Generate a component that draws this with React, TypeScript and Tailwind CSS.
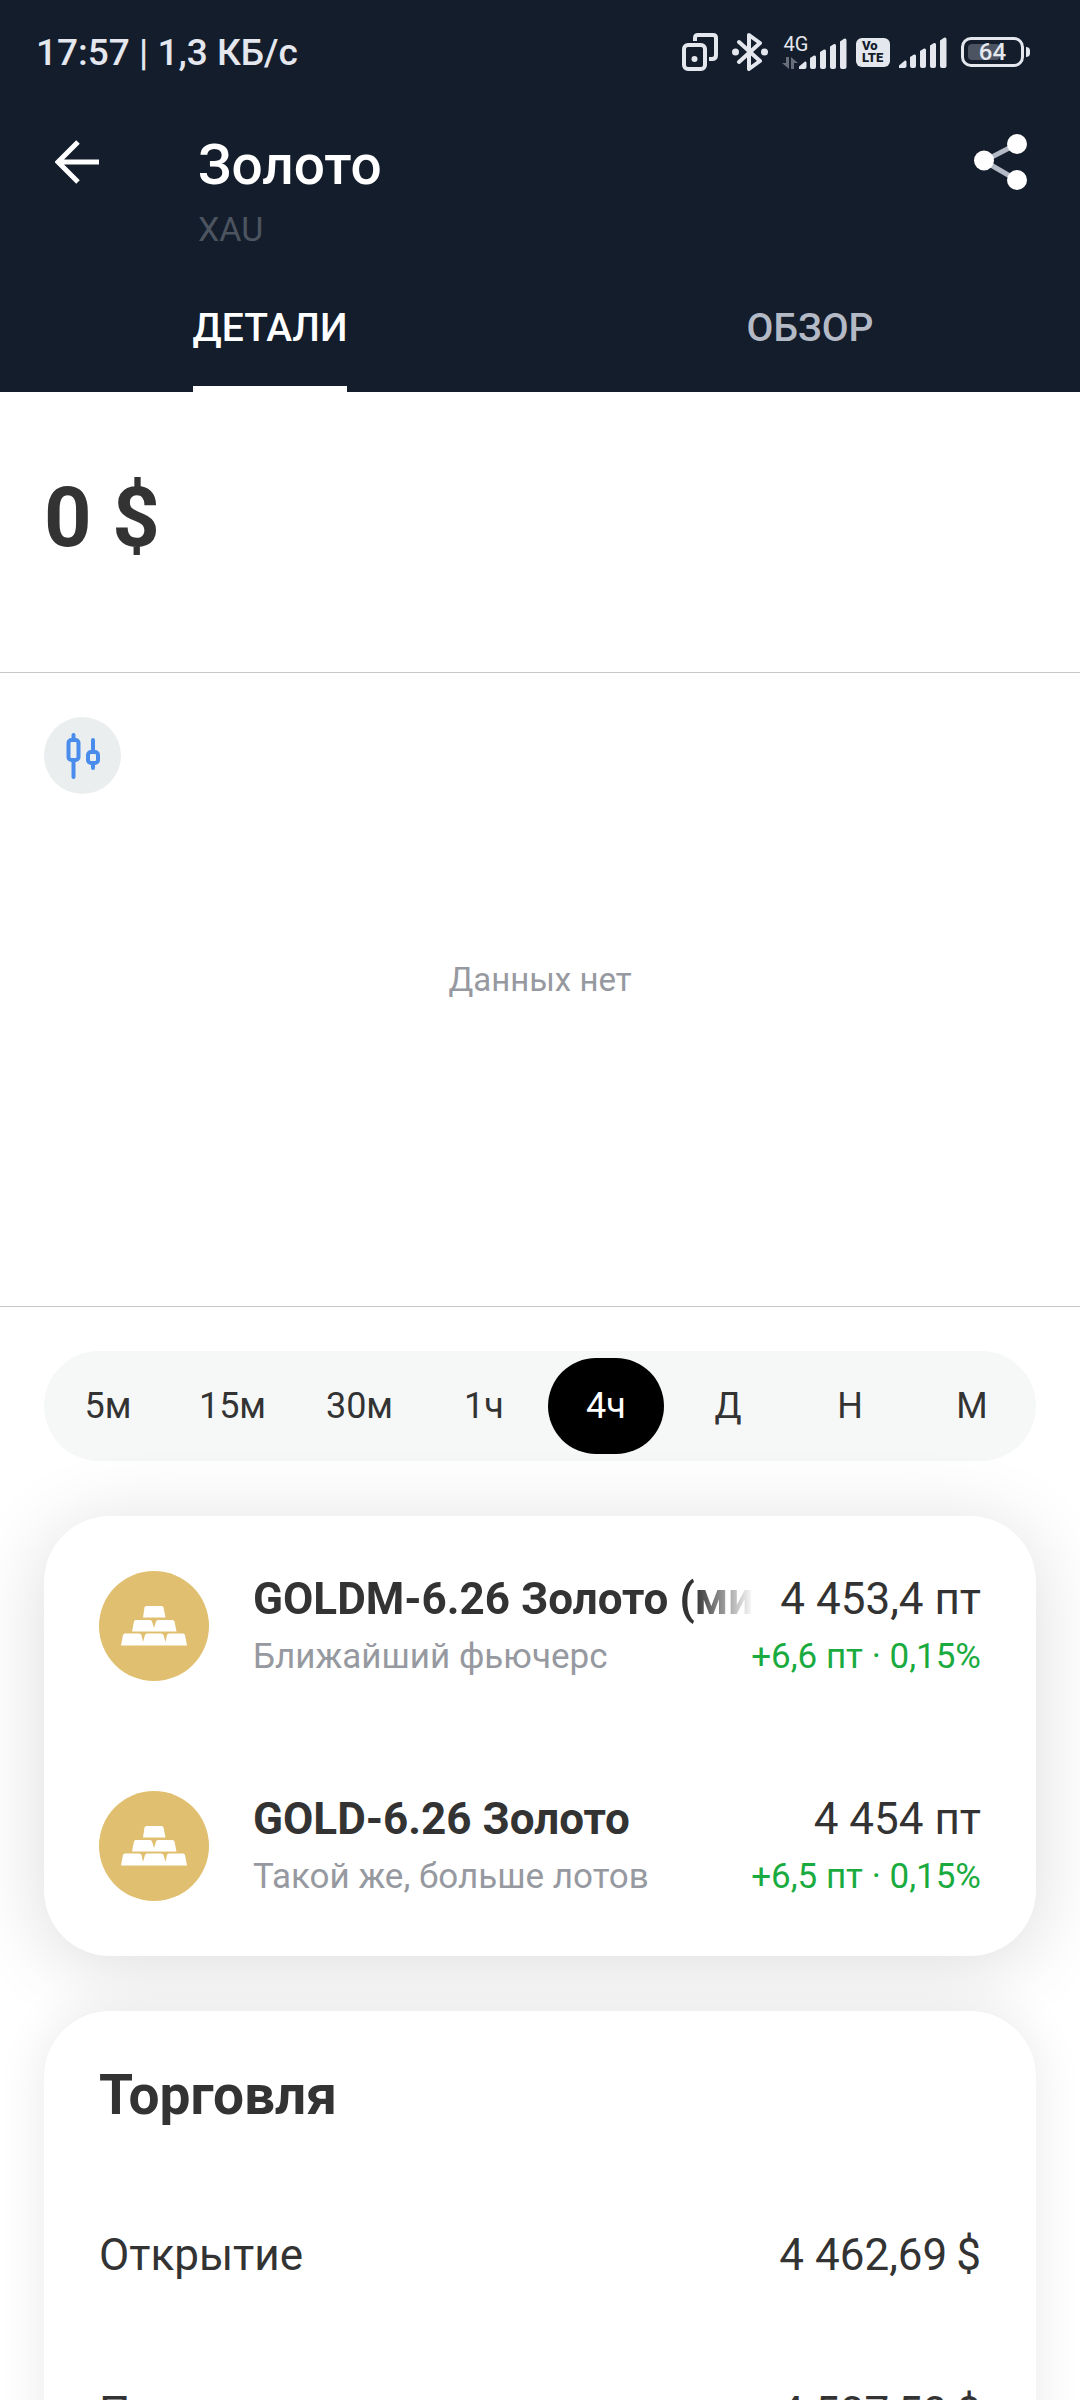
const periods = [
  { label: "5м", size: "basis-[116px]" },
  { label: "15м", size: "basis-[121px]" },
  { label: "30м", size: "basis-[121px]" },
  { label: "1ч", size: "basis-[116px]" },
  { label: "4ч", size: "basis-[116px]", active: true },
  { label: "Д", size: "basis-[116px]" },
  { label: "Н", size: "basis-[116px]" },
  { label: "М", size: "basis-[116px]" },
];

const futures = [
  { name: "GOLDM-6.26 Золото (мин", note: "Ближайший фьючерс", price: "4 453,4 пт", change: "+6,6 пт · 0,15%", fade: true },
  { name: "GOLD-6.26 Золото", note: "Такой же, больше лотов", price: "4 454 пт", change: "+6,5 пт · 0,15%", fade: false },
];

const trading = [
  { label: "Открытие", value: "4 462,69\u2009$" },
  { label: "Предыдущее закрытие", value: "4 507,50\u2009$" },
];

function SignalIcon() {
  return (
    <svg viewBox="0 0 48 31" className="h-[31px] w-12" fill="currentColor">
      <path d="M0 31V28.500L6 23.500Q7.500 23 7.500 25V29Q7.500 31 5.500 31Z" />
      <path d="M11 20L15 17.500Q17 17 17 19V29Q17 31 15 31H13Q11 31 11 29Z" />
      <path d="M21 14L25 11.500Q27 11 27 13V29Q27 31 25 31H23Q21 31 21 29Z" />
      <path d="M31 8.500L35 6Q37 5.500 37 7.500V29Q37 31 35 31H33Q31 31 31 29Z" />
      <path d="M41 3.500L45 .8Q47.500 0 47.500 2.500V29Q47.500 31 45.500 31H43Q41 31 41 29Z" />
    </svg>
  );
}

function StatusBar() {
  return (
    <div className="flex h-[104px] items-center justify-between pl-[36px] pr-[50px] text-[#e4e7ee]">
      <span className="pt-[2px] text-[37px] leading-[44px] font-medium">17:57 | 1,3 КБ/с</span>
      <div className="flex items-center">
        <svg viewBox="0 0 36 38" className="mr-[14px] h-[38px] w-9" fill="none" stroke="currentColor" strokeWidth="4">
          <rect x="2" y="12" width="21" height="24" rx="4" />
          <path d="M13 8V5Q13 2 16 2H31Q34 2 34 5V22Q34 26 30 26H27" />
          <circle cx="12.500" cy="26" r="3" fill="currentColor" stroke="none" />
        </svg>
        <svg viewBox="0 0 36 38" className="mr-[14px] h-[38px] w-9" fill="none" stroke="currentColor" strokeWidth="4">
          <path d="M7 9L28 28L17 36V2L28 10L7 29" strokeLinejoin="round" strokeLinecap="round" />
          <circle cx="3.500" cy="19" r="3.500" fill="currentColor" stroke="none" />
          <circle cx="32.500" cy="19" r="3.500" fill="currentColor" stroke="none" />
        </svg>
        <div className="flex h-[34px] items-end">
          <div className="-mr-[11px] flex h-[34px] flex-col items-center justify-between">
            <span className="text-[20px] leading-[18px]">4G</span>
            <svg viewBox="0 0 16 12" className="mr-3 h-3 w-4 opacity-40" fill="currentColor">
              <path d="M4 0H7V12L0 6H4Z" />
              <path d="M9 12V0L16 6H12V12Z" />
            </svg>
          </div>
          <SignalIcon />
        </div>
        <div className="mx-[9px] flex h-[29px] w-[34px] flex-col justify-center rounded-md bg-[#e4e7ee] pl-[6px] text-[13px] leading-[12px] font-black text-[#141d2b]">
          <span>Vo</span>
          <span>LTE</span>
        </div>
        <SignalIcon />
        <div className="ml-[14px] flex items-center gap-[2px]">
          <div className="relative flex h-[30px] w-[63px] items-center justify-center rounded-[10px] border-3 border-current">
            <div className="absolute inset-y-1 left-1 w-8 rounded-sm bg-[#4d5461]" />
            <span className="relative text-[24px] leading-[24px] font-medium">64</span>
          </div>
          <div className="h-[10px] w-1 rounded-r-full bg-current" />
        </div>
      </div>
    </div>
  );
}

function GoldIcon() {
  return (
    <div className="flex size-[110px] shrink-0 items-center justify-center rounded-full bg-[#e0c070]">
      <svg viewBox="0 0 66 40" className="h-10 w-[66px]" fill="#fff">
        <path d="M25.500 0H40.500Q42 0 42.500 1.500L44.500 11.500H22L23.500 1.500Q24 0 25.500 0Z" />
        <path d="M14.500 14H29Q30.500 14 31 15.500L33 22L35 15.500Q35.500 14 37 14H51.500Q53 14 53.500 15.500L55.500 25.500H11L13 15.500Q13.500 14 14.500 14Z" />
        <path d="M4 27.500H18Q20 27.500 20.500 29L22 36L24 29Q24.500 27.500 26 27.500H40Q42 27.500 42.500 29L44.500 36L46 29Q46.500 27.500 48 27.500H62Q63.500 27.500 64 29L66 39.500H0L2 29Q2.500 27.500 4 27.500Z" />
      </svg>
    </div>
  );
}

export default function App() {
  return (
    <div className="h-screen overflow-hidden bg-white font-[Roboto,sans-serif] text-[#333333]">
      <header className="bg-[#141d2b] text-white">
        <StatusBar />
        <div className="flex h-[160px] items-start pr-[53px] pl-[55px]">
          <button aria-label="Назад" className="mt-9 mr-[99px]">
            <svg viewBox="0 0 44 44" className="size-11" fill="none" stroke="currentColor" strokeWidth="5">
              <path d="M44 22H4M23 2L3 22L23 42" />
            </svg>
          </button>
          <div className="mt-[29px] grow">
            <h1 className="text-[55px] leading-[64px] font-medium">Золото</h1>
            <p className="mt-[10px] text-[34px] leading-[44px] text-[#4c5460]">XAU</p>
          </div>
          <button aria-label="Поделиться" className="mt-[30px]">
            <svg viewBox="0 0 53 56" className="h-14 w-[53px]">
              <path d="M43 10L10 27L43 46" fill="none" stroke="#b4bac5" strokeWidth="5" />
              <circle cx="43" cy="10" r="10" fill="#fff" />
              <circle cx="10" cy="26.500" r="10" fill="#fff" />
              <circle cx="43" cy="46" r="10" fill="#fff" />
            </svg>
          </button>
        </div>
        <nav className="grid h-32 grid-cols-2 text-[39px] leading-[44px] font-medium">
          <div className="flex justify-center">
            <button className="border-b-6 border-white pt-[6px]">ДЕТАЛИ</button>
          </div>
          <div className="flex justify-center">
            <button className="border-b-6 border-transparent pt-[6px] text-[#b4bac5]">ОБЗОР</button>
          </div>
        </nav>
      </header>

      <section className="border-b border-[#c8c8c8] px-11 pt-[78px] pb-[106px]">
        <p className="text-[83px] leading-[96px] font-bold">0 $</p>
      </section>

      <section className="flex h-[634px] flex-col border-b border-[#c8c8c8] px-11 pt-11">
        <button aria-label="Вид графика" className="flex size-[77px] items-center justify-center rounded-full bg-[#ebeeef]">
          <svg viewBox="0 0 34 48" className="h-12 w-[34px]" fill="none" stroke="#4a8cec" strokeWidth="4" strokeLinecap="round">
            <rect x="2.500" y="8" width="10" height="20" rx="3" />
            <path d="M7.500 3V8M7.500 28V45M27 8V20M27 32V36" />
            <rect x="22" y="20" width="10" height="11" rx="3" />
          </svg>
        </button>
        <p className="mt-[166px] text-center text-[33px] leading-[40px] text-[#96999f]">Данных нет</p>
      </section>

      <main className="px-11 pt-11">
        <div className="flex gap-[6px] rounded-full bg-[#f6f8f8] px-[6px] py-[7px] text-[36px]">
          {periods.map((p) => (
            <button key={p.label} className={`h-24 grow rounded-full ${p.size} ${p.active ? "bg-black text-white" : ""}`}>
              {p.label}
            </button>
          ))}
        </div>

        <div className="mt-[55px] rounded-[66px] bg-white shadow-[0_10px_80px_rgba(0,0,0,0.14)]">
          {futures.map((f) => (
            <a key={f.name} href="#" className="flex h-[220px] items-center px-[55px]">
              <GoldIcon />
              <div className="ml-11 flex min-w-0 grow flex-col">
                <div className="flex gap-[26px] text-[44px] leading-[56px]">
                  <span
                    className={`min-w-0 grow basis-0 overflow-hidden font-bold whitespace-nowrap ${
                      f.fade ? "[mask-image:linear-gradient(to_left,transparent,black_60px)]" : ""
                    }`}
                  >
                    {f.name}
                  </span>
                  <span className="whitespace-nowrap">{f.price}</span>
                </div>
                <div className="mt-[6px] flex justify-between text-[35px] leading-[48px]">
                  <span className="text-[#9699a0]">{f.note}</span>
                  <span className="text-[#1aab40]">{f.change}</span>
                </div>
              </div>
            </a>
          ))}
        </div>

        <section className="mt-[55px] rounded-t-[66px] bg-white px-[55px] pt-[52px] shadow-[0_0_50px_rgba(0,0,0,0.09)]">
          <h2 className="text-[55px] leading-[64px] font-bold">Торговля</h2>
          <dl className="pt-[49px]">
            {trading.map((t) => (
              <div key={t.label} className="flex h-[158px] items-center justify-between text-[44px] leading-[56px]">
                <dt>{t.label}</dt>
                <dd>{t.value}</dd>
              </div>
            ))}
          </dl>
        </section>
      </main>
    </div>
  );
}
